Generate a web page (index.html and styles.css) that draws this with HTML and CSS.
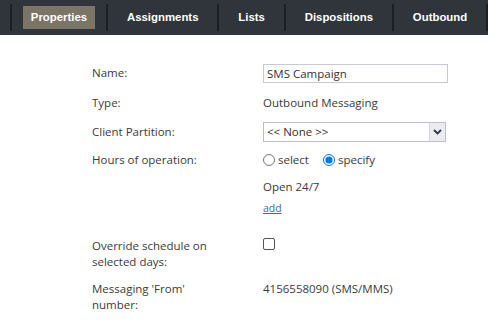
FILE: index.html
```html
<!DOCTYPE html>
<html>
<head>
<meta charset="utf-8">
<link rel="stylesheet" href="styles.css">
</head>
<body>
<nav class="tabs">
  <span class="sep"></span>
  <a class="tab active">Properties</a>
  <span class="sep"></span>
  <a class="tab">Assignments</a>
  <span class="sep"></span>
  <a class="tab">Lists</a>
  <span class="sep"></span>
  <a class="tab">Dispositions</a>
  <span class="sep"></span>
  <a class="tab">Outbound</a>
  <span class="sep"></span>
</nav>
<form class="form">
  <div class="row r-name">
    <label class="lbl">Name:</label>
    <div class="val"><input class="text" type="text" value="SMS Campaign"></div>
  </div>
  <div class="row r-type">
    <div class="lbl">Type:</div>
    <div class="val">Outbound Messaging</div>
  </div>
  <div class="row r-part">
    <div class="lbl">Client Partition:</div>
    <div class="val">
      <div class="select"><span class="sel-text">&lt;&lt; None &gt;&gt;</span><span class="sel-btn"><svg width="9" height="6" viewBox="0 0 9 6"><path d="M1 1 L4.5 4.5 L8 1" fill="none" stroke="#2b3a4e" stroke-width="1.8"/></svg></span></div>
    </div>
  </div>
  <div class="row r-hours">
    <div class="lbl">Hours of operation:</div>
    <div class="val radios">
      <label class="opt"><input type="radio" name="h"> select</label>
      <label class="opt"><input type="radio" name="h" checked> specify</label>
    </div>
  </div>
  <div class="row r-open">
    <div class="lbl"></div>
    <div class="val">Open 24/7</div>
  </div>
  <div class="row r-add">
    <div class="lbl"></div>
    <div class="val"><a class="link" href="#">add</a></div>
  </div>
  <div class="row r-over">
    <div class="lbl">Override schedule on<br>selected days:</div>
    <div class="val"><span class="chk"></span></div>
  </div>
  <div class="row r-msg">
    <div class="lbl">Messaging 'From'<br>number:</div>
    <div class="val">4156558090 (SMS/MMS)</div>
  </div>
</form>
</body>
</html>
```
FILE: styles.css
```css
html, body { margin: 0; padding: 0; background: #fff; }
body { font-family: "Open Sans", "Noto Sans", sans-serif; font-size: 11.5px; color: #3a3a3a; }

.tabs {
  height: 35px;
  background: #30343b;
  display: flex;
  align-items: center;
  padding-left: 10px;
}
.sep {
  width: 2px; height: 27px;
  background: #1c1e22;
}
.tab {
  font-family: "Liberation Sans", Arial, sans-serif;
  font-weight: bold;
  font-size: 11.4px;
  color: #fff;
  height: 23px;
  line-height: 23px;
  padding: 0 8px;
  margin: 0 11px 0 11px;
}
.tab.active { background: #7b7565; }

.form { padding: 0 0 0 92px; margin-top: 24px; }
.row { display: flex; }
.lbl { width: 171px; line-height: 16px; flex: none; }
.val { line-height: 16px; }
.r-name { height: 28px; align-items: center; }
.r-type { margin-top: 1px; height: 29px; align-items: center; }
.r-part { height: 29px; align-items: center; }
.r-hours { height: 28px; align-items: center; }
.r-open { height: 26px; align-items: center; }
.r-add { height: 20px; align-items: flex-start; }
.r-over { margin-top: 18px; height: 43px; align-items: flex-start; }
.r-msg { align-items: flex-start; }

.text {
  box-sizing: border-box;
  width: 185px; height: 19px;
  border: 1px solid #c9c9d6;
  padding: 0 3px;
  font: inherit; color: #333;
  margin: 0; outline: none;
}
.select {
  box-sizing: border-box;
  width: 183px; height: 20px;
  border: 1px solid #bdbdcc;
  display: flex; align-items: stretch;
}
.sel-text { flex: 1; padding-left: 3px; line-height: 18px; color: #333; }
.sel-btn {
  width: 15px; background: #ececf0; border-left: 1px solid #d6d6e0;
  display: flex; align-items: center; justify-content: center;
}
.radios { display: flex; align-items: center; gap: 14px; }
.opt { display: flex; align-items: center; }
.opt input { margin: 0 3px 0 0; width: 12px; height: 12px; }
.link { color: #4469a3; font-size: 10.5px; text-decoration: underline; }
.chk {
  display: block; box-sizing: border-box;
  width: 12px; height: 12px; margin-top: 0;
  border: 1px solid #555; border-radius: 2px;
}
```
